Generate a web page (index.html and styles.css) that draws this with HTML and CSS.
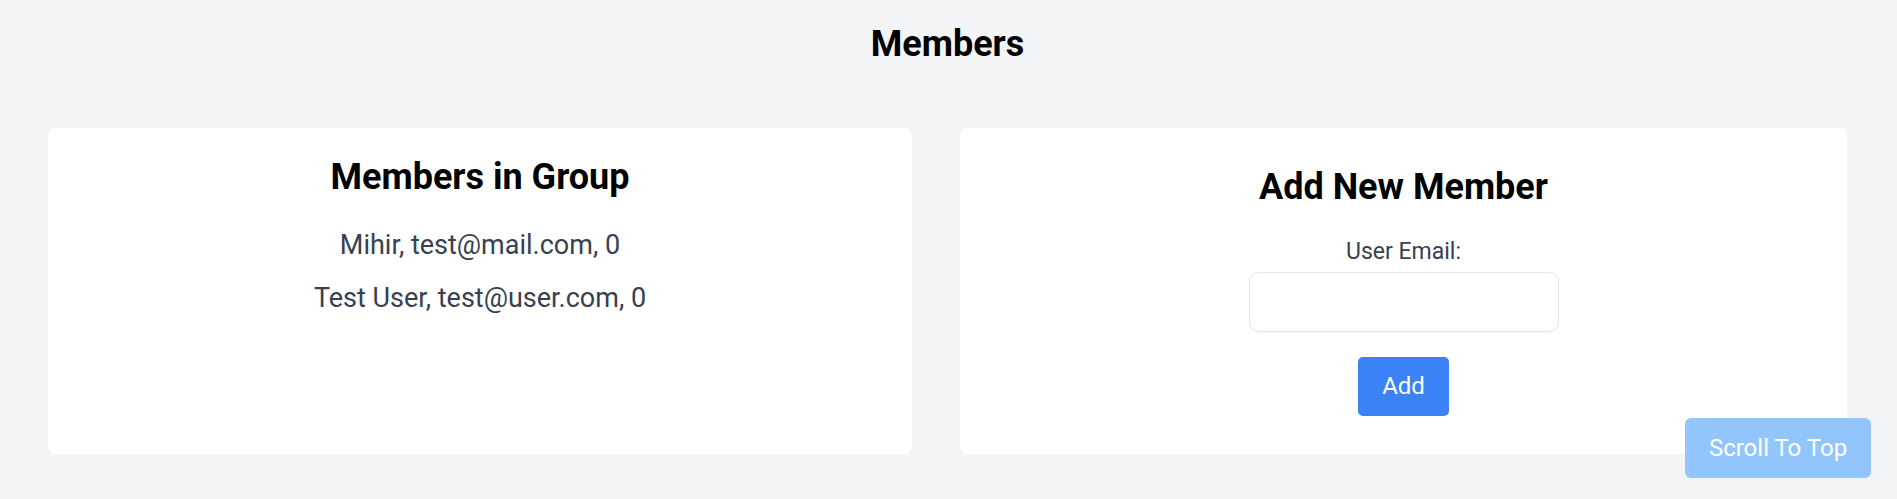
FILE: index.html
```html
<!DOCTYPE html>
<html lang="en">
<head>
<meta charset="utf-8">
<title>Members</title>
<link rel="stylesheet" href="styles.css">
</head>
<body>
<main class="page">
  <h1 class="title">Members</h1>
  <div class="cards">
    <section class="card card-list">
      <h2 class="card-title">Members in Group</h2>
      <ul class="member-list">
        <li>Mihir, test@mail.com, 0</li>
        <li>Test User, test@user.com, 0</li>
      </ul>
    </section>
    <section class="card card-form">
      <h2 class="card-title">Add New Member</h2>
      <label class="field-label" for="email">User Email:</label>
      <input class="field-input" id="email" type="email">
      <button class="btn-add" type="button">Add</button>
    </section>
  </div>
</main>
<button class="btn-top" type="button">Scroll To Top</button>
</body>
</html>
```
FILE: styles.css
```css
* { box-sizing: border-box; }
html, body { margin: 0; padding: 0; }
body {
  background: #f3f4f6;
  font-family: Roboto, "Liberation Sans", sans-serif;
  color: #000;
  overflow: hidden;
}
.page {
  padding: 24px 50px 0 48px;
}
.title {
  margin: 0 0 64px 0;
  font-size: 36px;
  line-height: 40px;
  font-weight: 700;
  text-align: center;
}
.cards {
  display: grid;
  grid-template-columns: 864fr 887fr;
  gap: 48px;
}
.card {
  background: #fff;
  border-radius: 8px;
  height: 326px;
  display: flex;
  flex-direction: column;
  align-items: center;
}
.card-list {
  padding-top: 29px;
}
.card-form {
  justify-content: center;
}
.card-title {
  margin: 0;
  font-size: 36px;
  line-height: 40px;
  font-weight: 700;
}
.member-list {
  list-style: none;
  margin: 30px 0 0 0;
  padding: 0;
  display: flex;
  flex-direction: column;
  align-items: center;
  gap: 17px;
}
.member-list li {
  font-size: 27px;
  line-height: 36px;
  color: #374151;
}
.field-label {
  margin-top: 31px;
  font-size: 23px;
  line-height: 28px;
  color: #374151;
}
.field-input {
  margin-top: 6px;
  width: 310px;
  height: 60px;
  border: 1px solid #e5e7eb;
  border-radius: 10px;
  background: #fff;
  box-shadow: 0 1px 2px rgba(0,0,0,0.04);
  font-size: 22px;
  padding: 0 12px;
}
.btn-add {
  margin-top: 25px;
  width: 91px;
  height: 59px;
  border: none;
  border-radius: 5px;
  background: #3b82f6;
  color: #fff;
  font-family: Roboto, "Liberation Sans", sans-serif;
  font-size: 24px;
  padding: 0;
}
.btn-top {
  position: fixed;
  right: 26px;
  bottom: 21px;
  width: 186px;
  height: 60px;
  border: none;
  border-radius: 6px;
  background: #93c5fd;
  color: #fff;
  font-family: Roboto, "Liberation Sans", sans-serif;
  font-size: 24px;
  padding: 0;
}
```
